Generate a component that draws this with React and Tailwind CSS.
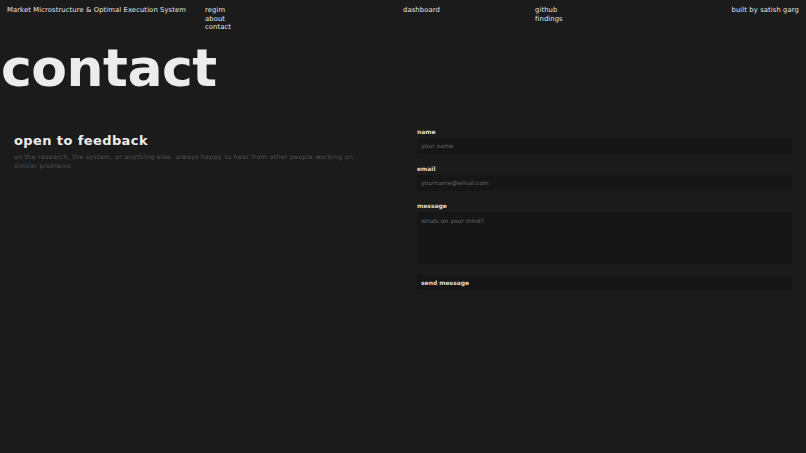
export default function App() {
  const f = { fontFamily: '"DejaVu Sans", sans-serif' };
  return (
    <div style={f} className="w-[806px] h-[453px] bg-[#1b1b1b] text-[#e8e8e8] overflow-hidden">
      <header className="flex px-[7px] pt-[6px] text-[6.8px] leading-[8.5px] tracking-[0.1px]">
        <div className="w-[198px]">Market Microstructure &amp; Optimal Execution System</div>
        <div className="w-[198px] flex flex-col"><span>regim</span><span>about</span><span>contact</span></div>
        <div className="w-[132px]">dashboard</div>
        <div className="flex flex-col"><span>github</span><span>findings</span></div>
        <div className="ml-auto">built by satish garg</div>
      </header>
      <h1 className="text-[52px] leading-none font-bold tracking-[-0.5px] text-[#ececec] mt-[10px] ml-[1px]">contact</h1>
      <div className="flex mt-[33px]">
        <div className="w-[417px] pl-[14px] pt-[4px] pr-[40px]">
          <h2 className="text-[13px] font-bold tracking-[0.4px] text-[#ececec]">open to feedback</h2>
          <p className="mt-[2px] text-[6.2px] leading-[9px] tracking-[0.35px] text-[#555] w-[355px]">on the research, the system, or anything else. always happy to hear from other people working on similar problems</p>
        </div>
        <div className="w-[375px] flex flex-col text-[6px]">
          <label className="text-[#ddd] font-bold">name</label>
          <div className="mt-[2px] h-[16px] bg-[#161616] px-[4px] flex items-center text-[#666]">your name</div>
          <label className="mt-[10px] text-[#ddd] font-bold">email</label>
          <div className="mt-[2px] h-[16px] bg-[#161616] px-[4px] flex items-center text-[#666]">yourname@email.com</div>
          <label className="mt-[10px] text-[#ddd] font-bold">message</label>
          <div className="mt-[2px] h-[52px] bg-[#161616] px-[4px] pt-[4px] text-[#666]">whats on your mind?</div>
          <div className="mt-[11px] h-[15px] bg-[#161616] px-[4px] flex items-center text-[#ddd] font-bold">send message</div>
        </div>
      </div>
    </div>
  );
}
